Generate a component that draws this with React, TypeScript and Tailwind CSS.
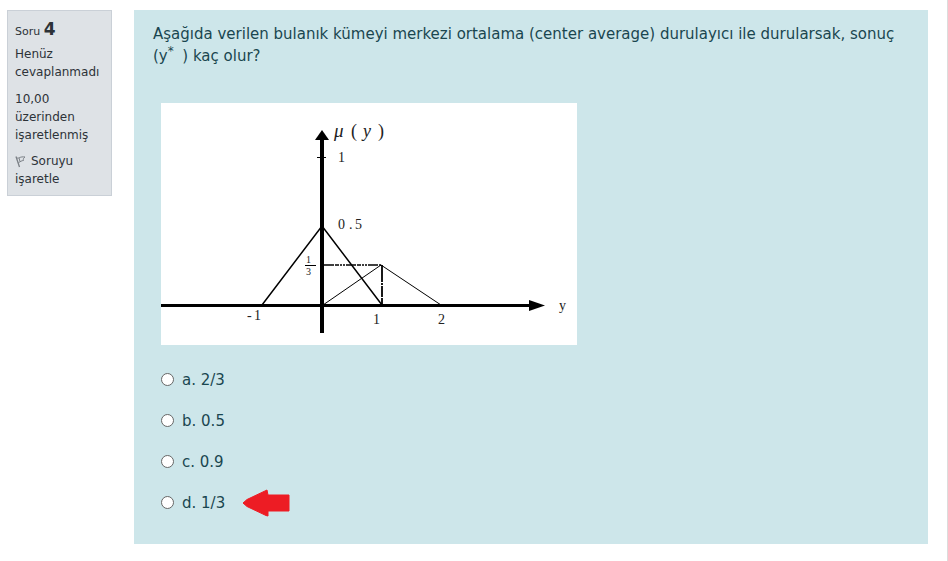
const options = [
  { id: "a", text: "2/3" },
  { id: "b", text: "0.5" },
  { id: "c", text: "0.9" },
  { id: "d", text: "1/3" },
];

function FlagIcon() {
  return (
    <svg width="12" height="13" viewBox="0 0 12 13" fill="none" stroke="#7b8086" className="mr-1 inline-block align-[-3px]" aria-hidden="true">
      <path d="M1 1.5 4.5 12" strokeWidth="1.3" />
      <path d="M2 3C4 3.6 5 1.3 10 2 8.5 3 8 4 8.5 5.5 6.5 5.5 5.5 6.8 3.5 7.5M4 3 5 6.5" />
    </svg>
  );
}

function QuestionInfo() {
  return (
    <aside className="w-[105px] shrink-0 border border-[#cad0d7] bg-[#dee2e6] px-[7px] pt-2 pb-[7px] font-['DejaVu_Sans','Verdana',sans-serif] text-[12px] leading-[18px] text-[#2d3238]">
      <h3 className="mb-[3px] text-[11px] leading-5">
        Soru <span className="text-[17px] font-bold">4</span>
      </h3>
      <p className="mb-[9px]">Henüz cevaplanmadı</p>
      <p className="mb-2">10,00 üzerinden işaretlenmiş</p>
      <a href="#flag" className="block">
        <FlagIcon />
        Soruyu işaretle
      </a>
    </aside>
  );
}

function MembershipChart() {
  return (
    <svg
      viewBox="0 0 416 242"
      className="block w-[416px] bg-white font-['Liberation_Serif','Times_New_Roman',serif]"
      role="img"
      aria-label="μ(y)"
    >
      <g stroke="#000" fill="none">
        <path d="M0 202.5H370" strokeWidth="3" />
        <path d="M161 36V230" strokeWidth="4" />
        <path d="M156 54.5H165" />
        <path d="M101 202 161 123 221 202" strokeWidth="1.5" />
        <path d="M162 202 220 162 280 202" />
        <path d="M163 162H220" strokeWidth="1.7" strokeDasharray="10 1 4 1 2 1 2 1" />
        <path d="M221 162V202" strokeWidth="1.8" strokeDasharray="17 1 2 1 11 1" />
        <path d="M144 162.5H155" />
      </g>
      <path d="M161 27 168 37H154Z" />
      <path d="M368 197 384 202.5 368 208Z" />
      <g fill="#222">
        <text x="173" y="34" fontSize="19" fontStyle="italic">μ</text>
        <text x="190" y="34" fontSize="18">(</text>
        <text x="202" y="34" fontSize="18" fontStyle="italic">y</text>
        <text x="217" y="34" fontSize="18">)</text>
        <text x="177" y="59" fontSize="14">1</text>
        <text x="177" y="126" fontSize="14">0</text>
        <text x="188" y="126" fontSize="14">.</text>
        <text x="194" y="126" fontSize="14">5</text>
        <text x="145" y="160" fontSize="10">1</text>
        <text x="145" y="172" fontSize="10">3</text>
        <text x="86" y="217" fontSize="14">-</text>
        <text x="93" y="217" fontSize="14">1</text>
        <text x="212" y="221" fontSize="14">1</text>
        <text x="277" y="221" fontSize="14">2</text>
        <text x="398" y="207" fontSize="14">y</text>
      </g>
    </svg>
  );
}

function RedArrow() {
  return (
    <svg width="48" height="28" viewBox="0 0 48 28" className="ml-[17px]" aria-hidden="true">
      <path d="M1 14 5 10.5 25 1 26 6H47V22H26V27L24 26.5 5 17.5Z" fill="#ed1c24" stroke="#ed1c24" strokeLinejoin="round" />
    </svg>
  );
}

export default function App() {
  return (
    <div className="flex min-h-screen items-start gap-[22px] border-r border-[#dcdcdc] bg-white pt-[10px] pr-[19px] pb-4 pl-[7px]">
      <QuestionInfo />
      <main className="min-w-0 flex-1 bg-[#cde6ea] px-[19px] pt-[13px] pb-[21px] font-['DejaVu_Sans','Verdana',sans-serif] text-[15px] leading-[22px] text-[#1a4650]">
        <p>
          Aşağıda verilen bulanık kümeyi merkezi ortalama (center average) durulayıcı ile durularsak, sonuç (y
          <sup className="text-[12px] leading-none">*&nbsp;</sup> ) kaç olur?
        </p>
        <div className="mt-9 pl-2">
          <MembershipChart />
          <fieldset className="mt-[14px]">
            {options.map((option) => (
              <div key={option.id} className="flex h-[41px] items-center">
                <input
                  type="radio"
                  id={`answer-${option.id}`}
                  name="answer"
                  className="m-0 size-[13px] shrink-0 appearance-none rounded-full border border-[#666] bg-white checked:border-4"
                />
                <label htmlFor={`answer-${option.id}`} className="pl-2">
                  {option.id}. {option.text}
                </label>
                {option.id === "d" && <RedArrow />}
              </div>
            ))}
          </fieldset>
        </div>
      </main>
    </div>
  );
}
